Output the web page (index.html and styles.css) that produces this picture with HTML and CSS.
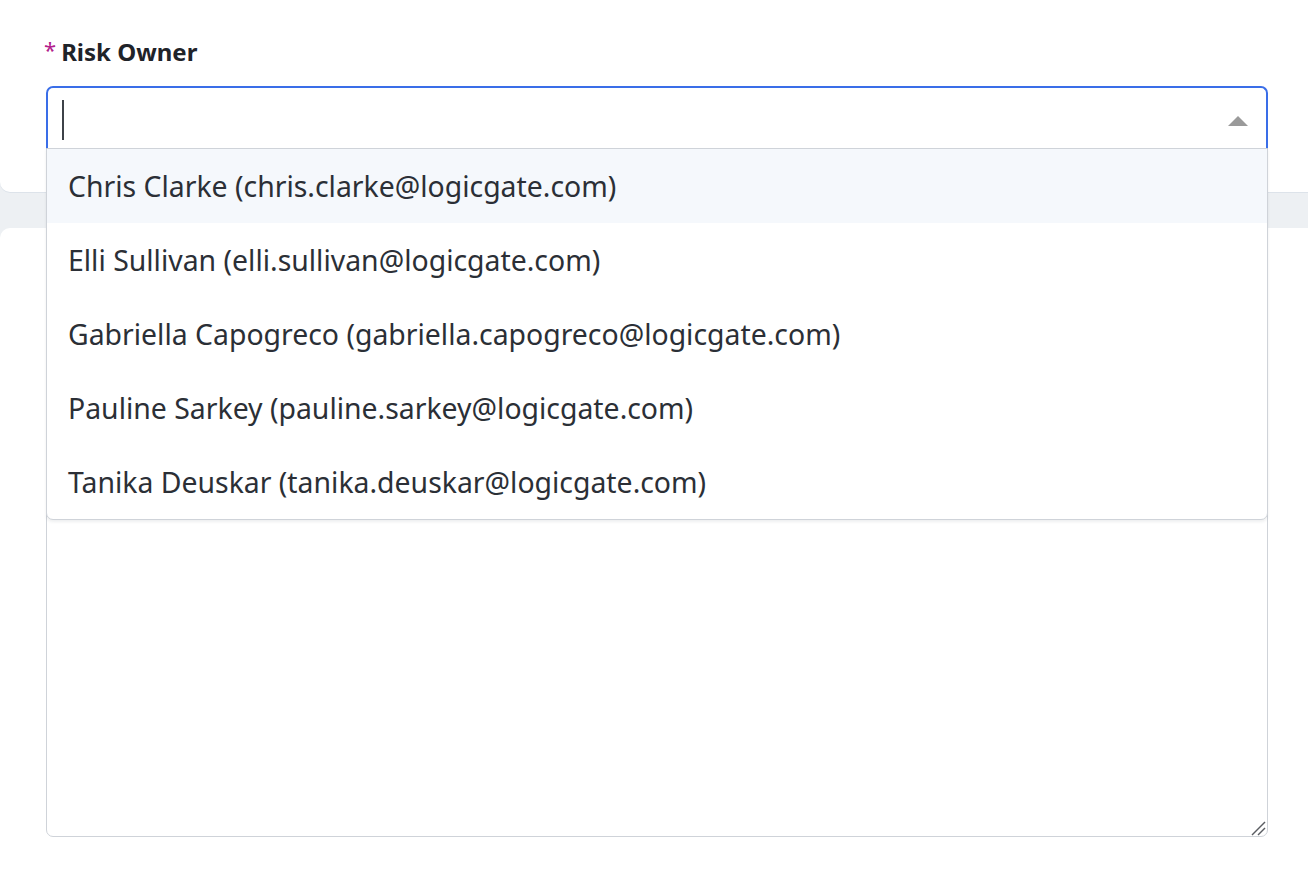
FILE: index.html
```html
<!DOCTYPE html>
<html>
<head>
<meta charset="UTF-8">
<title>Risk Owner</title>
<link rel="stylesheet" href="styles.css">
</head>
<body>
  <div class="pagina">
    <section class="tarjeta tarjeta-arriba">
      <label class="etiqueta"><span class="obligatorio">*</span>Risk Owner</label>
      <div class="combo">
        <div class="combo-campo">
          <span class="cursor"></span>
          <svg class="flecha" width="20" height="10" viewBox="0 0 20 10"><polygon points="0,10 10,0 20,10" fill="#9a9a9a"/></svg>
        </div>
        <ul class="lista">
          <li class="opcion activa">Chris Clarke (chris.clarke@logicgate.com)</li>
          <li class="opcion">Elli Sullivan (elli.sullivan@logicgate.com)</li>
          <li class="opcion">Gabriella Capogreco (gabriella.capogreco@logicgate.com)</li>
          <li class="opcion">Pauline Sarkey (pauline.sarkey@logicgate.com)</li>
          <li class="opcion">Tanika Deuskar (tanika.deuskar@logicgate.com)</li>
        </ul>
      </div>
    </section>

    <section class="tarjeta tarjeta-abajo">
      <div class="campo-texto">
        <textarea class="texto"></textarea>
        <!-- agarre para redimensionar -->
        <svg class="agarre" width="15" height="15" viewBox="0 0 15 15">
          <line x1="1" y1="14" x2="14" y2="1" stroke="#5a5d62" stroke-width="1.4"/>
          <line x1="7" y1="14" x2="14" y2="7" stroke="#5a5d62" stroke-width="1.4"/>
        </svg>
      </div>
    </section>
  </div>
</body>
</html>
```

FILE: styles.css
```css
* {
  padding: 0;
  margin: 0;
  box-sizing: border-box;
}

body {
  background: #edf0f3;
  overflow: hidden;
  height: 878px;
  font-family: "Noto Sans", Lato, sans-serif;
}

.pagina {
  width: 1330px;
  display: flex;
  flex-direction: column;
  gap: 36px;
}

.tarjeta {
  background: #fff;
  padding-left: 46px;
  padding-right: 62px;
}

.tarjeta-arriba {
  position: relative;
  z-index: 2;
  padding-top: 34px;
  padding-bottom: 43px;
  border-radius: 0 0 10px 10px;
  box-shadow: 0 1px 0 #dde3ea;
}

.etiqueta {
  display: block;
  height: 52px;
  font-size: 24px;
  line-height: 30px;
  font-weight: bold;
  color: #1f2329;
}

.obligatorio {
  color: #b3208c;
  font-size: 22px;
  font-weight: normal;
  margin-right: 5px;
  margin-left: -2px;
  vertical-align: 3px;
}

.combo {
  position: relative;
}

.combo-campo {
  height: 63px;
  border: 2px solid #3a6ee8;
  border-bottom: none;
  border-radius: 7px 7px 0 0;
  display: flex;
  align-items: center;
  justify-content: space-between;
  padding: 0 18px 0 14px;
}

.cursor {
  width: 2px;
  height: 40px;
  background: #3d4248;
  margin-top: 2px;
}

.flecha {
  margin-top: 4px;
}

.lista {
  position: absolute;
  top: 62px;
  left: 0;
  right: 0;
  list-style: none;
  background: #fff;
  border: 1px solid #cfd3d9;
  border-radius: 0 0 7px 7px;
  box-shadow: 0 2px 3px rgba(40, 50, 70, 0.08);
  overflow: hidden;
}

.opcion {
  height: 74px;
  line-height: 74px;
  padding-left: 21px;
  font-size: 28.4px;
  color: #2b2f36;
}

.opcion.activa {
  background: #f5f8fc;
}

.tarjeta-abajo {
  border-radius: 10px 10px 0 0;
  padding-top: 30px;
  height: 650px;
}

.campo-texto {
  position: relative;
}

.texto {
  display: block;
  width: 100%;
  height: 579px;
  border: 1px solid #cfd3d9;
  border-radius: 7px;
  resize: none;
  background: #fff;
}

.agarre {
  position: absolute;
  right: 2px;
  bottom: 1px;
}
```
